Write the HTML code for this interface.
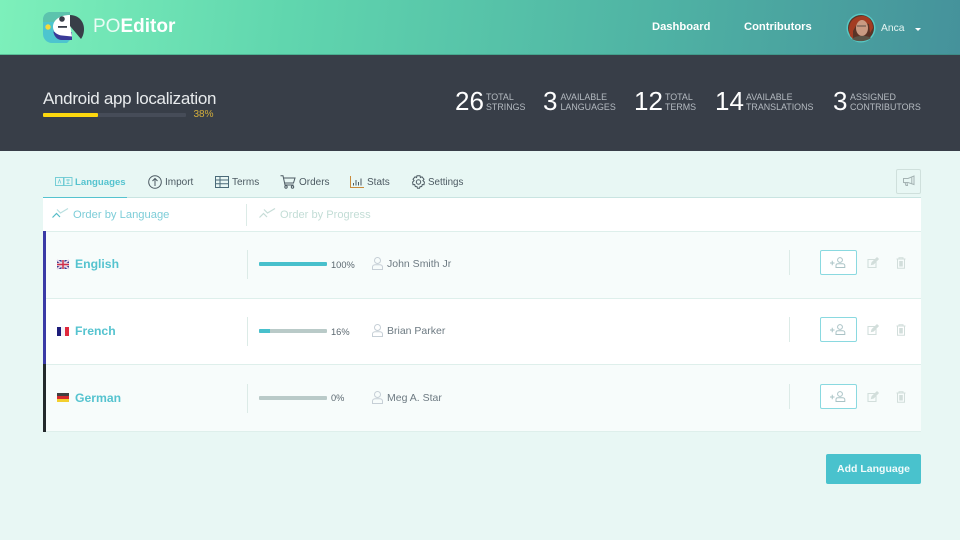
<!DOCTYPE html>
<html lang="en">
<head>
<meta charset="utf-8">
<title>POEditor</title>
<style>
html,body{margin:0;padding:0}
body{width:960px;height:540px;overflow:hidden;background:#e8f7f4;position:relative;font-family:"Liberation Sans",sans-serif}
.a{position:absolute;white-space:nowrap}
svg{position:absolute;overflow:visible}
#top{left:0;top:0;width:960px;height:55px;background:linear-gradient(97deg,#7df0bb 0%,#60d6ae 30%,#4fb3a4 68%,#45929b 100%);box-shadow:inset 0 -1px 0 rgba(50,130,110,.45)}
#dark{left:0;top:55px;width:960px;height:96px;background:#383e48}
.nav{color:#fff;font-size:11.200px;font-weight:700;top:19.500px;line-height:14px}
.num{color:#fff;font-size:26px;line-height:30px;top:86px}
.lb{color:#b4bac0;font-size:8.900px;line-height:10px}
.tab{font-size:10px;color:#4c5a62;top:176.500px;line-height:12px}
.row{left:43px;width:878px;border-bottom:1px solid #deefeb}
.sep{width:1px;background:#dcebe7}
.lang{left:75px;font-size:12.200px;font-weight:700;color:#55c3cf;line-height:14px}
.pct{left:331px;font-size:9.300px;color:#5b6870;line-height:12px}
.nm{left:387px;font-size:10.500px;color:#6d7a82;line-height:12px}
.pb{left:259px;width:68px;height:4px;background:#b9cac8;border-radius:1px;overflow:hidden}
.pb i{display:block;height:4px;background:#48c0cc}
.add{left:820px;width:35px;height:23px;border:1px solid #8ad9e0;border-radius:2px;background:#fff}
</style>
</head>
<body>
<div class="a" id="top"></div>
<div class="a" id="dark"></div>

<!-- logo -->
<svg style="left:43px;top:12px" width="42" height="32" viewBox="0 0 42 32">
  <path d="M8 0H27V28L24 31H9C4 31 0 27 0 22V8C0 3 3 0 8 0Z" fill="#4dc5cf"/>
  <path d="M8 0H27V10H0V8C0 3 3 0 8 0Z" fill="#5cc3ad"/>
  <circle cx="5" cy="15" r="2.700" fill="#f7d93a"/>
  <path d="M10 16C10 24 14 28 19 28H29V20H10Z" fill="#3a3a98"/>
  <path d="M27 3C17 3 10 8 10 15C10 20 14 23 19 23.500L29 24.500L27 12Z" fill="#fff"/>
  <path d="M27 3C36 3 41 10 41 17C41 21 40 24 38 27L27 14Z" fill="#383e48"/>
  <circle cx="19" cy="7" r="2.800" fill="#383e48"/>
  <rect x="15" y="14" width="9" height="1.800" fill="#383e48"/>
</svg>
<div class="a" style="left:93px;top:15px;font-size:19px;line-height:24px;color:#fff"><span style="font-weight:400;opacity:.85">PO</span><span style="font-weight:700">Editor</span></div>

<div class="a nav" style="left:652px">Dashboard</div>
<div class="a nav" style="left:744px">Contributors</div>
<svg style="left:846px;top:13px" width="30" height="30" viewBox="0 0 30 30">
  <circle cx="15" cy="15" r="14.500" fill="#58c8c4"/>
  <circle cx="15" cy="15" r="13" fill="#5a3326"/>
  <path d="M3 17C3 6 11 3 17 3C23 3 27 9 27 15L24 20L23 11L12 9L7 18L7 26L4 23Z" fill="#a33c22"/>
  <ellipse cx="16" cy="15" rx="6" ry="8" fill="#c99a82"/>
  <path d="M11 13H20" stroke="#6f5a50" stroke-width="1.200"/>
  <path d="M6 26C10 22 21 22 25 25C20 29 10 29 6 26Z" fill="#5b5346"/>
</svg>
<div class="a" style="left:881px;top:22.500px;font-size:10.300px;line-height:12px;color:#e6f5f2">Anca</div>
<div class="a" style="left:915px;top:28px;width:0;height:0;border-left:3px solid transparent;border-right:3px solid transparent;border-top:3px solid #fff"></div>

<!-- project -->
<div class="a" style="left:43px;top:88.500px;font-size:17px;line-height:20px;color:#e8ebed;letter-spacing:-.018em">Android app localization</div>
<div class="a" style="left:43px;top:113px;width:143px;height:4px;background:#464c58;border-radius:1px"></div>
<div class="a" style="left:43px;top:113px;width:55px;height:4px;background:#fdd80e;border-radius:1px"></div>
<div class="a" style="left:193.500px;top:109px;font-size:10px;line-height:12px;color:#d3ae3c">38%</div>

<div class="a num" style="left:455px">26</div>
<div class="a lb" style="left:486px;top:92px">TOTAL<br>STRINGS</div>
<div class="a num" style="left:543px">3</div>
<div class="a lb" style="left:560.500px;top:92px">AVAILABLE<br>LANGUAGES</div>
<div class="a num" style="left:634px">12</div>
<div class="a lb" style="left:665px;top:92px">TOTAL<br>TERMS</div>
<div class="a num" style="left:715px">14</div>
<div class="a lb" style="left:746px;top:92px">AVAILABLE<br>TRANSLATIONS</div>
<div class="a num" style="left:833px">3</div>
<div class="a lb" style="left:850px;top:92px">ASSIGNED<br>CONTRIBUTORS</div>

<!-- tabs -->
<svg style="left:55px;top:177px" width="18" height="10" viewBox="0 0 18 10" fill="none" stroke="#6ac9d3" stroke-width=".9">
  <rect x=".5" y=".5" width="8" height="8"/><rect x="9" y=".5" width="8" height="8"/>
  <path d="M3 6.500L4.500 2.500L6 6.500M11 3H15M13 2V7M11.500 6.500H14.500" stroke-width=".7"/>
</svg>
<div class="a tab" style="left:75px;color:#55c3cf;font-weight:700;font-size:9.600px">Languages</div>

<svg style="left:148px;top:175px" width="14" height="14" viewBox="0 0 14 14" fill="none" stroke="#4c5a62" stroke-width="1">
  <circle cx="7" cy="7" r="6.300"/><path d="M7 11V3.500M4.500 6L7 3.500L9.500 6"/>
</svg>
<div class="a tab" style="left:165px">Import</div>

<svg style="left:215px;top:176px" width="14" height="12" viewBox="0 0 14 12" fill="none" stroke="#4a6a78" stroke-width="1">
  <rect x=".5" y=".5" width="13" height="11"/><path d="M.5 4H13.500M.5 7.700H13.500M5 .5V11.500"/>
</svg>
<div class="a tab" style="left:232px">Terms</div>

<svg style="left:280px;top:175px" width="16" height="14" viewBox="0 0 16 14" fill="none" stroke="#4c5a62" stroke-width="1">
  <path d="M.5 .8H3L5 10H13.500M3.500 3H15L13.500 8H4.500"/><circle cx="6" cy="12" r="1.200"/><circle cx="12.500" cy="12" r="1.200"/>
</svg>
<div class="a tab" style="left:299px">Orders</div>

<svg style="left:350px;top:176px" width="14" height="12" viewBox="0 0 14 12" fill="none">
  <path d="M.5 0V11.500H14" stroke="#c98a3a" stroke-width="1"/>
  <path d="M3.500 9.500V7M6 9.500V4M8.500 9.500V6M11 9.500V2.500" stroke="#4c5a62" stroke-width="1"/>
</svg>
<div class="a tab" style="left:367px">Stats</div>

<svg style="left:412px;top:175px" width="13" height="14" viewBox="0 0 13 14" fill="none" stroke="#4c5a62" stroke-width="1">
  <path d="M5 .7H8L8.400 2.500L10 1.800L12 4.300L10.900 5.600L12.400 7L12 9.700L10.300 9.500L9.700 11.500L8 11.700L7.500 13.300H5.500L5 11.700L3.300 11.500L2.700 9.500L1 9.700L.6 7L2.100 5.600L1 4.300L3 1.800L4.600 2.500Z"/><circle cx="6.500" cy="7" r="2.200"/>
</svg>
<div class="a tab" style="left:428px;font-size:9.800px">Settings</div>

<div class="a" style="left:896px;top:169px;width:23px;height:23px;border:1px solid #cfe0dc;border-radius:2px"></div>
<svg style="left:903px;top:175px" width="12" height="12" viewBox="0 0 12 12" fill="none" stroke="#a4b3b3" stroke-width="1">
  <path d="M.5 3.500H5L11 1V9.500L5 7.500H.5ZM2 7.500L3 10.500H4.500L4 7.500M8.800 2V9"/>
</svg>

<!-- table -->
<div class="a" style="left:43px;top:197px;width:878px;height:1px;background:#c9e4e1"></div>
<div class="a" style="left:43px;top:197px;width:84px;height:1px;background:#55c3cf"></div>
<div class="a" style="left:43px;top:198px;width:878px;height:33px;background:#fff;border-bottom:1px solid #deefeb"></div>
<div class="a sep" style="left:246px;top:204px;height:22px"></div>

<svg style="left:52px;top:208px" width="17" height="11" viewBox="0 0 17 11" fill="none" stroke-width="1.200">
  <path d="M.5 9.500L4.500 5.500L8 9" stroke="#55bcc8"/><path d="M5 1.500L8.500 5L16 .5" stroke="#b9dfe0"/>
</svg>
<div class="a" style="left:73px;top:209px;font-size:11.200px;line-height:13px;color:#7dcdd8">Order by Language</div>
<svg style="left:259px;top:208px" width="17" height="11" viewBox="0 0 17 11" fill="none" stroke="#c6dcd7" stroke-width="1.200">
  <path d="M.5 9.500L4.500 5.500L8 9M5 1.500L8.500 5L16 .5"/>
</svg>
<div class="a" style="left:280px;top:209px;font-size:11.100px;line-height:13px;color:#c3ddd6">Order by Progress</div>

<div class="a row" style="top:232px;height:66px;background:#f7fcfb"></div>
<div class="a row" style="top:299px;height:65px;background:#fff"></div>
<div class="a row" style="top:365px;height:66px;background:#f7fcfb"></div>
<div class="a" style="left:43px;top:231px;width:3px;height:133px;background:#3a3aa6"></div>
<div class="a" style="left:43px;top:364px;width:3px;height:68px;background:#23292b"></div>

<!-- flags -->
<svg style="left:57px;top:260px" width="12" height="9" viewBox="0 0 12 9">
  <rect width="12" height="9" fill="#3c3b8f"/>
  <path d="M0 0L12 9M12 0L0 9" stroke="#e6d7e6" stroke-width="1.800"/>
  <path d="M6 0V9M0 4.500H12" stroke="#e6e0e8" stroke-width="3"/>
  <path d="M6 0V9M0 4.500H12" stroke="#cf2d4a" stroke-width="1.500"/>
</svg>
<svg style="left:57px;top:327px" width="12" height="9" viewBox="0 0 12 9">
  <rect width="4" height="9" fill="#1d1d7a"/><rect x="4" width="4" height="9" fill="#f4f4f8"/><rect x="8" width="4" height="9" fill="#e0283c"/>
</svg>
<svg style="left:57px;top:393px" width="12" height="9" viewBox="0 0 12 9">
  <rect width="12" height="3" fill="#404040"/><rect y="3" width="12" height="3" fill="#d5292c"/><rect y="6" width="12" height="3" fill="#f3cf2e"/>
</svg>

<div class="a lang" style="top:257px">English</div>
<div class="a lang" style="top:324px">French</div>
<div class="a lang" style="top:391px">German</div>

<div class="a sep" style="left:247px;top:250px;height:29px"></div>
<div class="a sep" style="left:247px;top:317px;height:29px"></div>
<div class="a sep" style="left:247px;top:384px;height:29px"></div>

<div class="a pb" style="top:262px"><i style="width:68px"></i></div>
<div class="a pb" style="top:329px"><i style="width:11px"></i></div>
<div class="a pb" style="top:396px"><i style="width:0"></i></div>
<div class="a pct" style="top:259px">100%</div>
<div class="a pct" style="top:326px">16%</div>
<div class="a pct" style="top:392px">0%</div>

<svg style="left:372px;top:257px" width="11" height="13" viewBox="0 0 11 13" fill="none" stroke="#c6cfd6" stroke-width="1"><circle cx="5.500" cy="3.500" r="3"/><path d="M.5 12.500V10C.5 8.500 2 7.800 3.500 7.800H7.500C9 7.800 10.500 8.500 10.500 10V12.500Z"/></svg>
<svg style="left:372px;top:324px" width="11" height="13" viewBox="0 0 11 13" fill="none" stroke="#c6cfd6" stroke-width="1"><circle cx="5.500" cy="3.500" r="3"/><path d="M.5 12.500V10C.5 8.500 2 7.800 3.500 7.800H7.500C9 7.800 10.500 8.500 10.500 10V12.500Z"/></svg>
<svg style="left:372px;top:391px" width="11" height="13" viewBox="0 0 11 13" fill="none" stroke="#c6cfd6" stroke-width="1"><circle cx="5.500" cy="3.500" r="3"/><path d="M.5 12.500V10C.5 8.500 2 7.800 3.500 7.800H7.500C9 7.800 10.500 8.500 10.500 10V12.500Z"/></svg>
<div class="a nm" style="top:258px">John Smith Jr</div>
<div class="a nm" style="top:325px">Brian Parker</div>
<div class="a nm" style="top:392px">Meg A. Star</div>

<div class="a sep" style="left:789px;top:250px;height:25px"></div>
<div class="a sep" style="left:789px;top:317px;height:25px"></div>
<div class="a sep" style="left:789px;top:384px;height:25px"></div>

<div class="a add" style="top:250px"></div>
<div class="a add" style="top:317px"></div>
<div class="a add" style="top:384px"></div>

<svg style="left:830px;top:257px" width="16" height="11" viewBox="0 0 16 11" fill="none" stroke="#aac3c6" stroke-width="1"><path d="M0 6H4.500M2.250 3.750V8.250"/><circle cx="10" cy="3" r="2.400"/><path d="M6 10.500V8.500C6 7.300 7 6.800 8 6.800H12.500C13.500 6.800 14.800 7.300 14.800 8.500V10.500Z"/></svg>
<svg style="left:830px;top:324px" width="16" height="11" viewBox="0 0 16 11" fill="none" stroke="#aac3c6" stroke-width="1"><path d="M0 6H4.500M2.250 3.750V8.250"/><circle cx="10" cy="3" r="2.400"/><path d="M6 10.500V8.500C6 7.300 7 6.800 8 6.800H12.500C13.500 6.800 14.800 7.300 14.800 8.500V10.500Z"/></svg>
<svg style="left:830px;top:391px" width="16" height="11" viewBox="0 0 16 11" fill="none" stroke="#aac3c6" stroke-width="1"><path d="M0 6H4.500M2.250 3.750V8.250"/><circle cx="10" cy="3" r="2.400"/><path d="M6 10.500V8.500C6 7.300 7 6.800 8 6.800H12.500C13.500 6.800 14.800 7.300 14.800 8.500V10.500Z"/></svg>

<svg style="left:867px;top:257px" width="12" height="12" viewBox="0 0 12 12" fill="none" stroke="#d2dedb" stroke-width="1.100"><path d="M8 2.500H1V10.500H9V5"/><path d="M4.500 7.500L5 5.500L10 .8L11.300 2L6.500 7Z" fill="#d2dedb"/></svg>
<svg style="left:867px;top:324px" width="12" height="12" viewBox="0 0 12 12" fill="none" stroke="#d2dedb" stroke-width="1.100"><path d="M8 2.500H1V10.500H9V5"/><path d="M4.500 7.500L5 5.500L10 .8L11.300 2L6.500 7Z" fill="#d2dedb"/></svg>
<svg style="left:867px;top:391px" width="12" height="12" viewBox="0 0 12 12" fill="none" stroke="#d2dedb" stroke-width="1.100"><path d="M8 2.500H1V10.500H9V5"/><path d="M4.500 7.500L5 5.500L10 .8L11.300 2L6.500 7Z" fill="#d2dedb"/></svg>

<svg style="left:896px;top:257px" width="10" height="12" viewBox="0 0 10 12" fill="none" stroke="#d2dedb" stroke-width="1"><path d="M.5 2H9.500M3 2V.7H7V2M1.500 2V11.300H8.500V2"/><rect x="3.200" y="4" width="3.600" height="5.500" fill="#d2dedb" stroke="none"/></svg>
<svg style="left:896px;top:324px" width="10" height="12" viewBox="0 0 10 12" fill="none" stroke="#d2dedb" stroke-width="1"><path d="M.5 2H9.500M3 2V.7H7V2M1.500 2V11.300H8.500V2"/><rect x="3.200" y="4" width="3.600" height="5.500" fill="#d2dedb" stroke="none"/></svg>
<svg style="left:896px;top:391px" width="10" height="12" viewBox="0 0 10 12" fill="none" stroke="#d2dedb" stroke-width="1"><path d="M.5 2H9.500M3 2V.7H7V2M1.500 2V11.300H8.500V2"/><rect x="3.200" y="4" width="3.600" height="5.500" fill="#d2dedb" stroke="none"/></svg>

<div class="a" style="left:826px;top:454px;width:95px;height:30px;background:#49c2cd;border-radius:2px;color:#f1fbfb;font-size:10.500px;font-weight:700;line-height:30px;text-align:center">Add Language</div>
</body>
</html>
